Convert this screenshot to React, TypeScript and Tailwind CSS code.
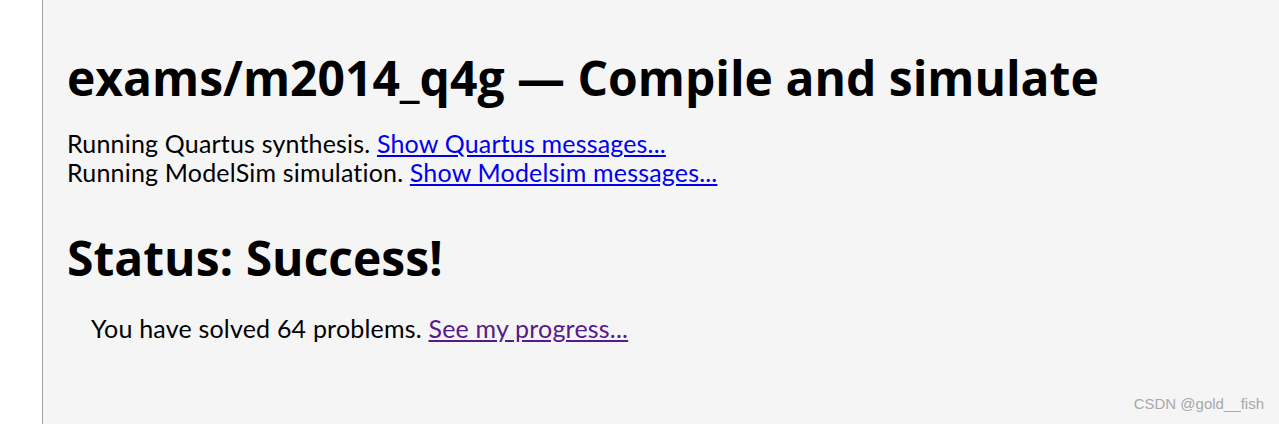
export default function App() {
  return (
    <div className="flex h-[424px] w-full overflow-hidden bg-white">
      <div className="w-[42px] shrink-0 bg-white" />
      <div className="relative flex-1 border-l border-[#a0a0a0] bg-[#f5f5f5] pl-[24px] font-['Lato',sans-serif] text-black">
        <h1 className="mt-[50px] font-['Open_Sans',sans-serif] text-[48px] font-bold leading-[56px]">
          exams/m2014_q4g — Compile and simulate
        </h1>
        <div className="mt-[23px] text-[25px] leading-[29px] tracking-[0.18px]">
          <div>
            Running Quartus synthesis.{" "}
            <a href="#" className="text-[#0000ee] underline">Show Quartus messages...</a>
          </div>
          <div>
            Running ModelSim simulation.{" "}
            <a href="#" className="text-[#0000ee] underline">Show Modelsim messages...</a>
          </div>
        </div>
        <h2 className="mt-[43px] font-['Open_Sans',sans-serif] text-[48px] font-bold leading-[56px]">
          Status: Success!
        </h2>
        <div className="mt-[28px] pl-[24px] text-[25px] leading-[29px] tracking-[0.2px]">
          You have solved 64 problems.{" "}
          <a href="#" className="text-[#551a8b] underline">See my progress...</a>
        </div>
        <div className="absolute bottom-[9px] right-[15px] font-['Liberation_Sans',sans-serif] text-[15px] text-[#a8a8a8]">
          CSDN @gold__fish
        </div>
      </div>
    </div>
  );
}
